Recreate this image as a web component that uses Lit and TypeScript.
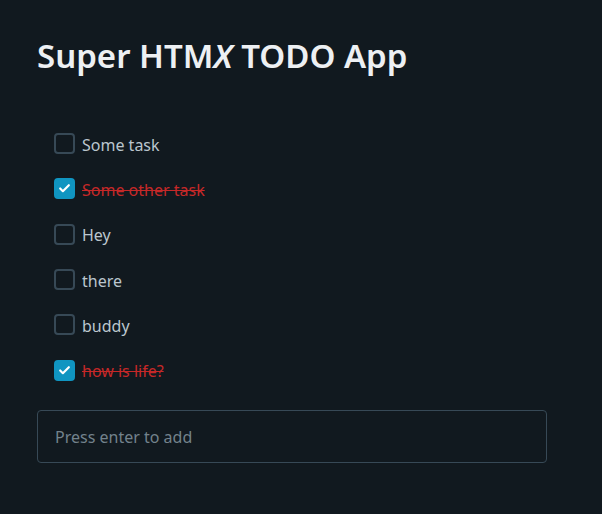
import { LitElement, html, css, svg } from "lit";
import { customElement, state } from "lit/decorators.js";
import { classMap } from "lit/directives/class-map.js";

interface Task {
  title: string;
  done: boolean;
}

@customElement("app-root")
export class AppRoot extends LitElement {
  static styles = css`
    :host {
      display: block;
      box-sizing: border-box;
      min-height: 100vh;
      padding: 34px 55px 51px 37px;
      background: #11191f;
      color: #bbc6ce;
      font: 16px/26px "Noto Sans", sans-serif;
    }
    .title {
      margin: 0 0 43px;
      color: #edf0f3;
      font-size: 33px;
      line-height: 44px;
      font-weight: 600;
    }
    .tasks {
      display: grid;
      grid-auto-rows: 1fr;
      min-height: 272px;
      margin: 0;
      padding: 0 17px;
      list-style: none;
    }
    .task {
      display: flex;
      align-items: center;
    }
    .label {
      display: flex;
      align-items: center;
      gap: 7px;
      cursor: pointer;
    }
    .check {
      display: grid;
      width: 21px;
      height: 21px;
    }
    .box,
    .tick {
      grid-area: 1 / 1;
    }
    .box {
      appearance: none;
      box-sizing: border-box;
      width: 21px;
      height: 21px;
      margin: 0;
      border: 2px solid #374956;
      border-radius: 4px;
      cursor: pointer;
    }
    .box:checked {
      border-color: #1095c1;
      background: #1095c1;
    }
    .tick {
      place-self: center;
      width: 13px;
      height: 13px;
      fill: none;
      stroke: #fff;
      stroke-width: 4;
      stroke-linecap: round;
      stroke-linejoin: round;
      pointer-events: none;
    }
    .text {
      padding-top: 2px;
    }
    .done {
      color: #c62828;
      text-decoration: line-through;
    }
    .entry {
      display: block;
      box-sizing: border-box;
      width: 100%;
      height: 53px;
      margin: 17px 0 0;
      padding: 12px 17px;
      border: 1px solid #374956;
      border-radius: 4px;
      background: transparent;
      color: #bbc6ce;
      font: inherit;
      outline: none;
    }
    .entry:focus {
      border-color: #1095c1;
    }
    .entry::placeholder {
      color: #73828c;
      opacity: 1;
    }
  `;

  @state() private tasks: Task[] = [
    { title: "Some task", done: false },
    { title: "Some other task", done: true },
    { title: "Hey", done: false },
    { title: "there", done: false },
    { title: "buddy", done: false },
    { title: "how is life?", done: true },
  ];

  private toggle(index: number) {
    this.tasks = this.tasks.map((t, i) => (i === index ? { ...t, done: !t.done } : t));
  }

  private add(event: KeyboardEvent) {
    const input = event.target as HTMLInputElement;
    const title = input.value.trim();
    if (event.key !== "Enter" || !title) return;
    this.tasks = [...this.tasks, { title, done: false }];
    input.value = "";
  }

  private renderTask(task: Task, index: number) {
    return html`<li class="task">
      <label class="label">
        <span class="check">
          <input class="box" type="checkbox" .checked=${task.done} @change=${() => this.toggle(index)} />
          ${task.done
            ? html`<svg class="tick" viewBox="0 0 24 24" aria-hidden="true">${svg`<polyline points="20 6 9 17 4 12"></polyline>`}</svg>`
            : null}
        </span>
        <span class=${classMap({ text: true, done: task.done })}>${task.title}</span>
      </label>
    </li>`;
  }

  render() {
    return html`
      <h1 class="title">Super HTM<em>X</em> TODO App</h1>
      <ul class="tasks">${this.tasks.map((task, i) => this.renderTask(task, i))}</ul>
      <input class="entry" type="text" placeholder="Press enter to add" aria-label="New task" @keydown=${this.add} />
    `;
  }
}
